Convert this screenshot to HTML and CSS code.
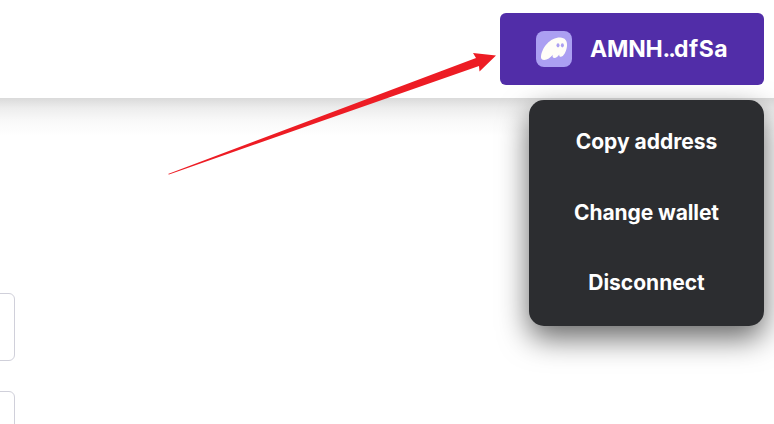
FILE: index.html
```html
<!DOCTYPE html>
<html lang="en">
<head>
<meta charset="utf-8">
<title>Wallet</title>
<link rel="stylesheet" href="styles.css">
</head>
<body>
<header class="header">
  <div class="wallet">
    <button class="wallet-button">
      <svg class="wallet-icon" viewBox="0 0 36 36" aria-hidden="true">
        <rect width="36" height="36" rx="8" fill="#ab9ff2"/>
        <path d="M5 25.5C6 16.5 14 6.5 24 6.5C29 6.5 31.5 10 31 15C30.5 20.5 27.5 25.8 24.8 25.8C23.5 25.8 23 24.5 23.2 23.4C21.8 25.5 20.2 27 18.5 27C16.8 27 16.1 25.6 16.8 23.8C14.4 26.6 11.3 29 8.3 29C5.8 29 4.8 27.8 5 25.5Z" fill="#fffdf8"/>
        <ellipse cx="22" cy="14.3" rx="1.5" ry="2.1" fill="#ab9ff2"/>
        <ellipse cx="26.4" cy="14.3" rx="1.5" ry="2.1" fill="#ab9ff2"/>
      </svg>
      <span class="wallet-label">AMNH<span class="dots">..</span><span class="tail">dfSa</span></span>
    </button>
    <ul class="menu">
      <li class="menu-item">Copy address</li>
      <li class="menu-item menu-change">Change wallet</li>
      <li class="menu-item">Disconnect</li>
    </ul>
  </div>
</header>
<main class="content">
  <div class="field"></div>
  <div class="field"></div>
</main>
<svg class="pointer" viewBox="0 0 774 424" aria-hidden="true">
  <path d="M168 174L476 58L473 53L496 55.5L479.5 71.5L479 66L169 174.5Z" fill="#ed1c24"/>
</svg>
</body>
</html>
```
FILE: styles.css
```css
* { box-sizing: border-box; }
body {
  margin: 0;
  height: 424px;
  overflow: hidden;
  background: #fff;
  font-family: Inter, "Open Sans", sans-serif;
}
.header {
  position: relative;
  z-index: 1;
  display: flex;
  justify-content: flex-end;
  height: 98px;
  padding: 13px 10px 0 0;
  background: #fff;
}
.wallet { position: relative; }
.wallet-button {
  position: relative;
  z-index: 2;
  display: flex;
  align-items: center;
  gap: 18px;
  width: 264px;
  height: 72px;
  padding: 0 36px;
  border: 0;
  border-radius: 6px;
  background: #512da8;
  color: #fff;
  font: 700 23px/72px Inter, "Open Sans", sans-serif;
}
.wallet-icon { flex: none; width: 36px; height: 36px; }
.wallet-label { white-space: nowrap; letter-spacing: -0.2px; }
.dots { letter-spacing: -1.9px; }
.tail { letter-spacing: 0.5px; }
.menu {
  position: absolute;
  z-index: 1;
  top: 87px;
  right: 0;
  width: 235px;
  height: 226px;
  margin: 0;
  padding: 14px 15px;
  list-style: none;
  border-radius: 15px;
  background: #2c2d30;
  box-shadow: 0 12px 30px rgba(0, 0, 0, .6);
}
.menu-item {
  height: 55px;
  margin-bottom: 15.5px;
  color: #fff;
  font-size: 21px;
  font-weight: 700;
  line-height: 55px;
  text-align: center;
  white-space: nowrap;
}
.menu-change { letter-spacing: -0.1px; }
.content {
  height: 326px;
  overflow: hidden;
  padding-top: 195px;
  background: linear-gradient(#dadada, #ededed 10px, #f9f9f9 23px, #fff 38px);
}
.field {
  width: 35px;
  height: 68px;
  margin: 0 0 30px -20px;
  border: 1px solid #d0d0da;
  border-radius: 6px;
  background: #fff;
}
.pointer {
  position: absolute;
  z-index: 3;
  inset: 0;
  width: 774px;
  height: 424px;
  pointer-events: none;
}
```
